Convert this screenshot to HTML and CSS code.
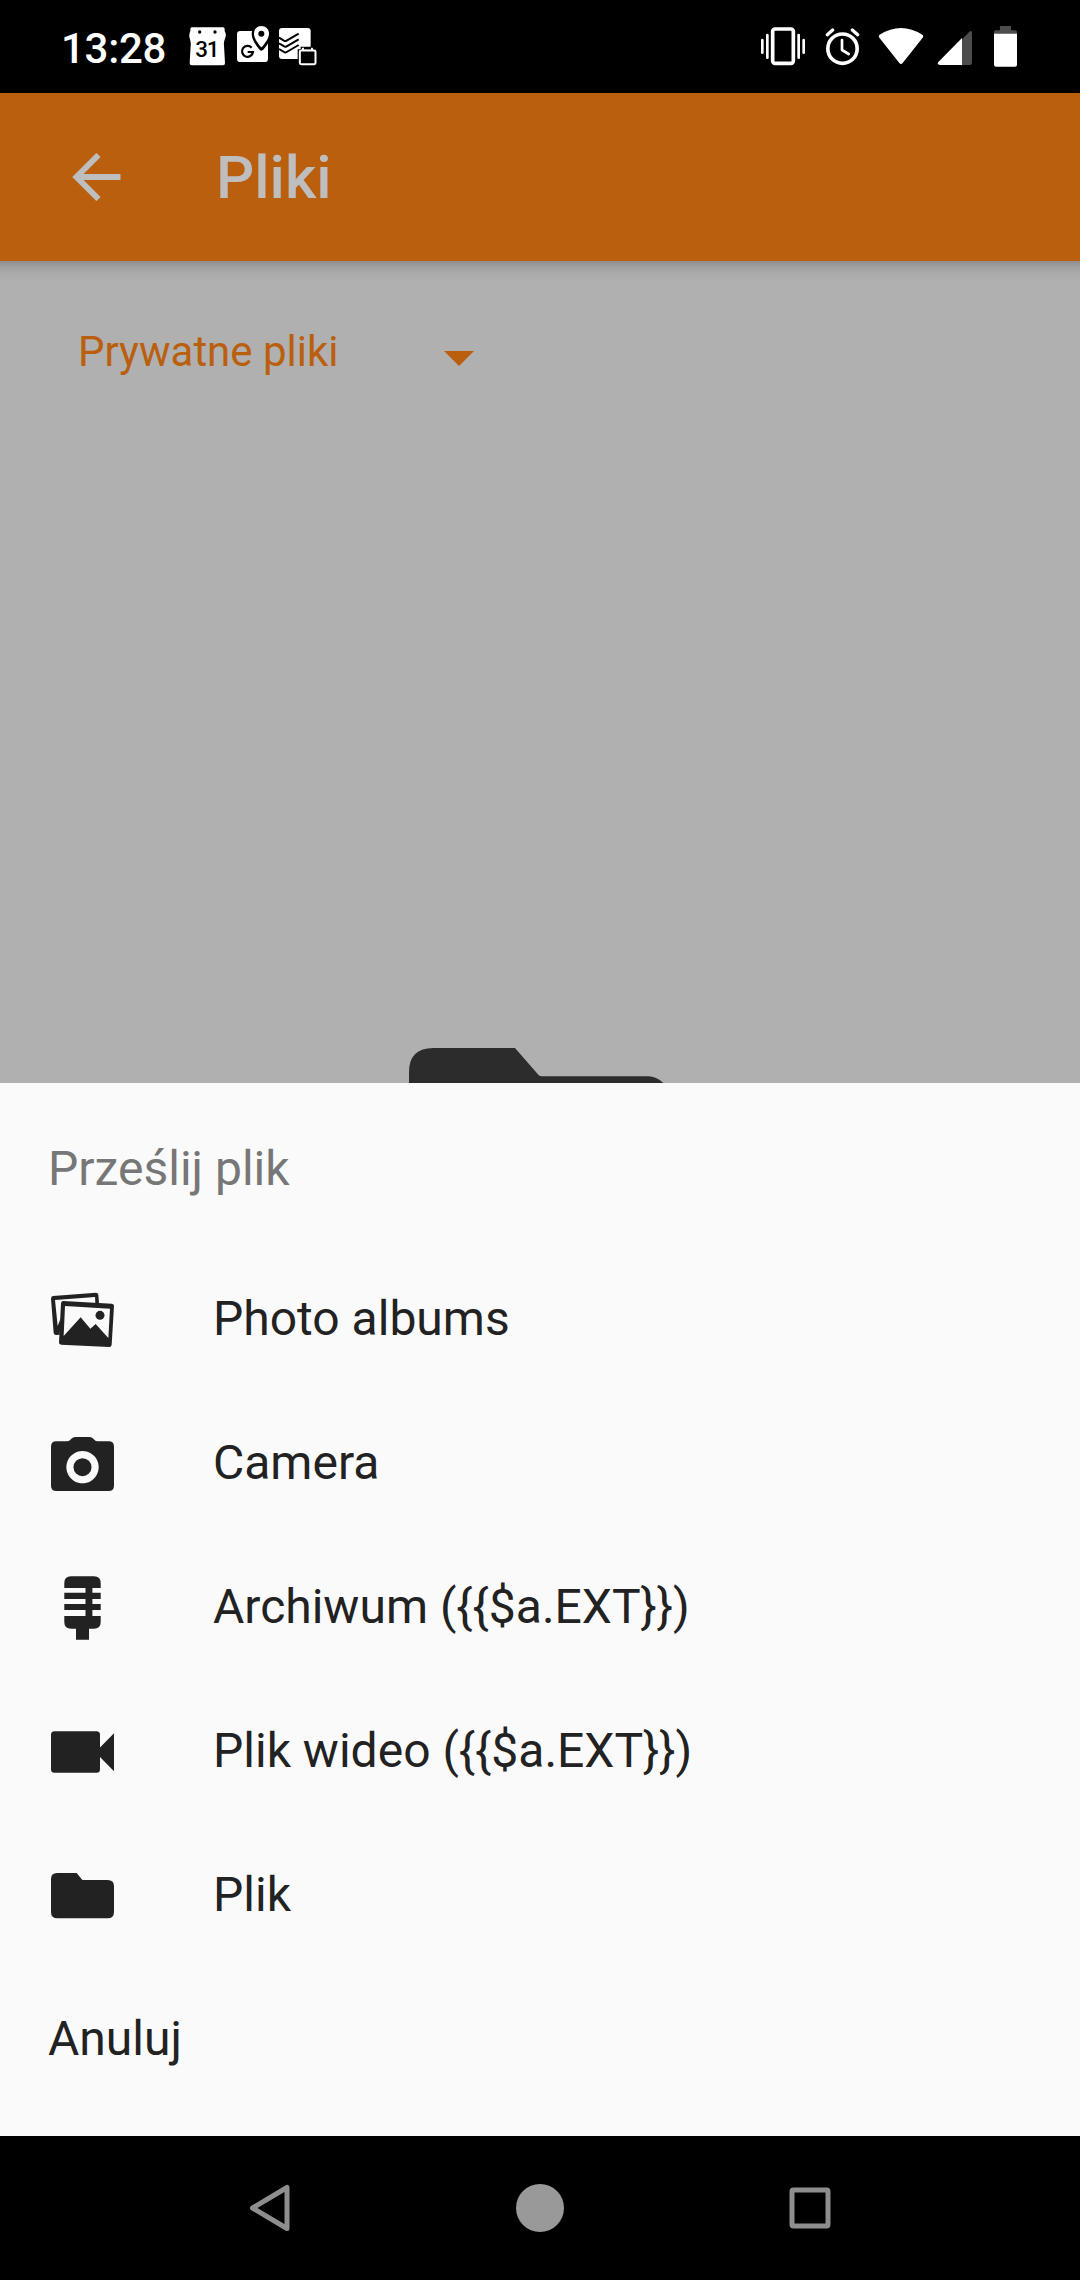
FILE: index.html
```html
<!DOCTYPE html>
<html lang="pl">
<head>
<meta charset="utf-8">
<title>Pliki</title>
<link rel="stylesheet" href="styles.css">
</head>
<body>
<div class="screen">
  <header class="status">
    <div class="status-left">
      <span class="clock">13:28</span>
      <svg class="ic-calendar" viewBox="447 48 111 120" width="37" height="40">
        <path fill="#fff" d="M456 52h93q5 0 5 5v6q5 9 3 17l-4 12q-2 7-1 15l3 52q0 7-6 7h-94q-6 0-6-7l3-52q1-8-1-15l-3-12q-1-8 3-17v-6q0-5 5-5z"/>
        <circle cx="479" cy="66" r="5"/><circle cx="525" cy="66" r="5"/>
        <text class="cal-day" x="500" y="142" text-anchor="middle">31</text>
      </svg>
      <svg class="ic-maps" viewBox="591 48 96 120" width="32" height="40">
        <rect x="591" y="63" width="93" height="93" rx="10" fill="#fff"/>
        <path stroke="#000" stroke-width="14" stroke-linejoin="round" d="M664 48c-13 0-22 10-22 23 0 18 22 44 22 44s23-26 23-44c0-13-10-23-23-23z"/>
        <path fill="#fff" d="M664 48c-13 0-22 10-22 23 0 18 22 41 22 41s23-23 23-41c0-13-10-23-23-23z"/>
        <circle cx="664" cy="71" r="9"/>
        <path fill="none" stroke="#000" stroke-width="6.500" d="M635 113a16.500 16.500 0 1 0 4 13h-16"/>
      </svg>
      <svg class="ic-tasks" viewBox="714 48 117 120" width="39" height="40">
        <rect x="717" y="54" width="95" height="93" rx="9" fill="#fff"/>
        <g fill="none" stroke="#000" stroke-width="6"><path d="M717 83l17 10q3 1 6-1l36-21"/><path d="M717 100l17 10q3 1 6-1l36-21"/><path d="M717 117l17 10q3 1 6-1l36-21"/></g>
        <path d="M782 110h38v12h14v46h-61v-50h9z"/>
        <rect x="779.500" y="121.500" width="47" height="41" rx="4" stroke="#fff" stroke-width="6"/>
        <path fill="#fff" d="M784 121l3-8h5v6h21v-6h5l3 8z"/>
      </svg>
    </div>
    <div class="status-right">
      <svg class="ic-vibrate" viewBox="63 45 132 129" width="44" height="43">
        <rect x="98" y="57" width="62" height="103" rx="7" fill="none" stroke="#fff" stroke-width="11"/>
        <path stroke="#fff" stroke-width="8" stroke-linecap="round" d="M67 90v38M82 75v68M176 75v68M191 90v38"/>
      </svg>
      <svg class="ic-alarm" viewBox="255 45 105 129" width="35" height="43">
        <circle cx="307.500" cy="116" r="44" fill="none" stroke="#fff" stroke-width="11"/>
        <path fill="none" stroke="#fff" stroke-width="8" stroke-linecap="round" stroke-linejoin="round" d="M306 90v30l20 12"/>
        <path stroke="#fff" stroke-width="10" stroke-linecap="round" d="M262 74l16-14M353 74l-16-14"/>
      </svg>
      <svg class="ic-wifi" viewBox="414 45 138 129" width="46" height="43">
        <path fill="#fff" d="M419 74q64-40 128 0 5 4 1 9l-60 76q-5 6-10 0l-60-76q-4-5 1-9z"/>
      </svg>
      <svg class="ic-signal" viewBox="591 45 108 129" width="36" height="43">
        <path fill="#4d4d4d" d="M666 88l22-23q8-5 8 4v89q0 7-6 7h-24z"/>
        <path fill="#fff" d="M666 84v81h-66q-10-1-5-9z"/>
      </svg>
      <svg class="ic-battery" viewBox="759 45 75 129" width="25" height="43">
        <path fill="#4d4d4d" d="M780 48h33v13h13q5 0 5 5v9h-69v-9q0-5 5-5h13z"/>
        <path fill="#fff" d="M762 71h69v93q0 6-6 6h-57q-6 0-6-6z"/>
      </svg>
    </div>
  </header>

  <div class="appbar">
    <svg class="back" viewBox="0 0 48 48" width="49" height="48"><path fill="none" stroke="#bebebe" stroke-width="6" d="M26 2L4 24l22 22M4 24h44"/></svg>
    <h1 class="title">Pliki</h1>
  </div>

  <main class="content">
    <div class="select">
      <span class="select-label">Prywatne pliki</span>
      <svg class="caret" viewBox="0 0 30 15" width="30" height="15"><path fill="#ba5f0d" d="M0 0h30L15 15z"/></svg>
    </div>
    <svg class="empty-folder" viewBox="57 53 786 105" width="262" height="35"><path fill="#2c2c2c" d="M57 158v-32q0-73 73-73h245l70 80q4 5 10 5h320q24 0 45 20z"/></svg>
  </main>

  <section class="sheet">
    <h2 class="sheet-title">Prześlij plik</h2>
    <ul class="actions">
      <li class="action">
        <svg viewBox="63 42 189 216" width="63" height="72">
          <g fill="#222">
            <path fill-rule="evenodd" d="M69 78l129-10q6 0 7 6l2 25h-11l-1-18-120 9 8 78 9-23-3 49-11 1q-6 0-7-6l-8-103q0-7 6-8z"/>
            <path fill-rule="evenodd" d="M100 93l146 8q6 1 6 7l-7 116q-1 7-7 7l-145-7q-7-1-6-7l6-117q1-7 7-7zM105 108l-4 90 51-56 29 34 16-14 38 42 5-88z"/>
            <circle cx="210" cy="136" r="13.500"/>
          </g>
        </svg>
        <span class="label">Photo albums</span>
      </li>
      <li class="action">
        <svg viewBox="63 474 189 216" width="63" height="72">
          <path fill="#222" fill-rule="evenodd" d="M79 514h32q6 0 10-5l3-3q5-5 12-5h43q7 0 11 5l3 3q4 5 10 5h33q16 0 16 16v117q0 16-16 16H79q-16 0-16-16V530q0-16 16-16zM157.500 543a48.500 48.500 0 1 0 .1 0z"/>
          <circle cx="157.500" cy="591.500" r="27" fill="#222"/>
        </svg>
        <span class="label">Camera</span>
      </li>
      <li class="action">
        <svg viewBox="0 0 63 72" width="63" height="72">
          <path fill="#222" d="M13.300 16v-5q0-6.700 6.700-6.700h23q6.700 0 6.700 6.700v5h-8.300v4.700h8.300V27h-8.300v5h8.300v6h-8.300v6h8.300v6q0 6.700-6.700 6.700h-5v11H25v-11h-5q-6.700 0-6.700-6.700v-6h21.200v-6H13.300v-6h21.200v-5H13.300v-6.300h21.200V16z"/>
        </svg>
        <span class="label">Archiwum ({{$a.EXT}})</span>
      </li>
      <li class="action">
        <svg viewBox="0 0 63 72" width="63" height="72">
          <path fill="#222" d="M3.500 15.300h42q3.500 0 3.500 3.500v12.700l14-14.300v38L49 41v12.300q0 3.500-3.500 3.500h-42q-3.500 0-3.500-3.500V18.800q0-3.500 3.500-3.500z"/>
        </svg>
        <span class="label">Plik wideo ({{$a.EXT}})</span>
      </li>
      <li class="action">
        <svg viewBox="63 30 189 216" width="63" height="72">
          <path fill="#222" d="M81 69h59l17 21h76q19 0 19 19v77q0 19-19 19H82q-19 0-19-19V87q0-18 18-18z"/>
        </svg>
        <span class="label">Plik</span>
      </li>
      <li class="action"><span class="label">Anuluj</span></li>
    </ul>
  </section>

  <nav class="navbar">
    <svg viewBox="0 0 60 60" width="60" height="60"><path fill="none" stroke="#8e8e8e" stroke-width="5" stroke-linejoin="round" d="M47 9.500v41L12.500 30z"/></svg>
    <svg viewBox="0 0 60 60" width="60" height="60"><circle cx="30" cy="30" r="24" fill="#999"/></svg>
    <svg viewBox="0 0 60 60" width="60" height="60"><rect x="12" y="12" width="36" height="36" rx="1.500" fill="none" stroke="#8e8e8e" stroke-width="5"/></svg>
  </nav>
</div>
</body>
</html>
```
FILE: styles.css
```css
* { box-sizing: border-box; }
body { margin: 0; background: #000; font-family: Roboto, "Noto Sans", sans-serif; }
svg { display: block; flex: none; }

.screen { display: flex; flex-direction: column; width: 1080px; height: 2280px; overflow: hidden; }

.status { display: flex; justify-content: space-between; height: 93px; padding: 25px 62px 0 61px; background: #000; }
.status-left, .status-right { display: flex; align-items: flex-start; }
.status-left { padding-top: 1px; }
.clock { width: 128px; margin-top: 3px; font-size: 42px; line-height: 40px; font-weight: 500; letter-spacing: -0.3px; color: #fff; white-space: nowrap; }
.ic-maps { margin-left: 11px; }
.ic-tasks { margin-left: 9px; }
.cal-day { font: 500 67px Roboto, sans-serif; letter-spacing: -4px; }
.ic-alarm { margin-left: 20px; }
.ic-wifi { margin-left: 18px; }
.ic-signal { margin-left: 13px; }
.ic-battery { margin-left: 20px; }

.appbar { display: flex; align-items: center; height: 168px; padding-left: 72px; background: #ba5f0d; }
.title { margin: 2px 0 0 95px; font-size: 60px; line-height: 72px; font-weight: 500; color: #bebebe; }

.content { display: flex; flex-direction: column; justify-content: space-between; height: 822px; background: linear-gradient(#8e8e8e, #a0a0a0 6px, #aaa 12px, #b0b0b0 20px); }
.select { display: flex; align-items: center; padding: 61px 0 0 78px; color: #ba5f0d; }
.select-label { width: 366px; font-size: 42px; line-height: 60px; }
.caret { margin-top: 13px; }
.empty-folder { margin-left: 409px; }

.sheet { height: 1053px; padding: 0 48px; background: #fafafa; color: #222; font-size: 48px; }
.sheet-title { margin: 0; height: 165px; padding-top: 50px; font-size: 48px; line-height: 72px; font-weight: 400; color: #777; }
.actions { margin: 0; padding: 0; list-style: none; }
.action { display: flex; align-items: center; height: 144px; line-height: 72px; }
.action svg { margin: 0 99px 0 3px; }
.label { padding-bottom: 2px; }

.navbar { display: flex; justify-content: space-between; align-items: center; height: 144px; padding: 0 240px; background: #000; }
```
